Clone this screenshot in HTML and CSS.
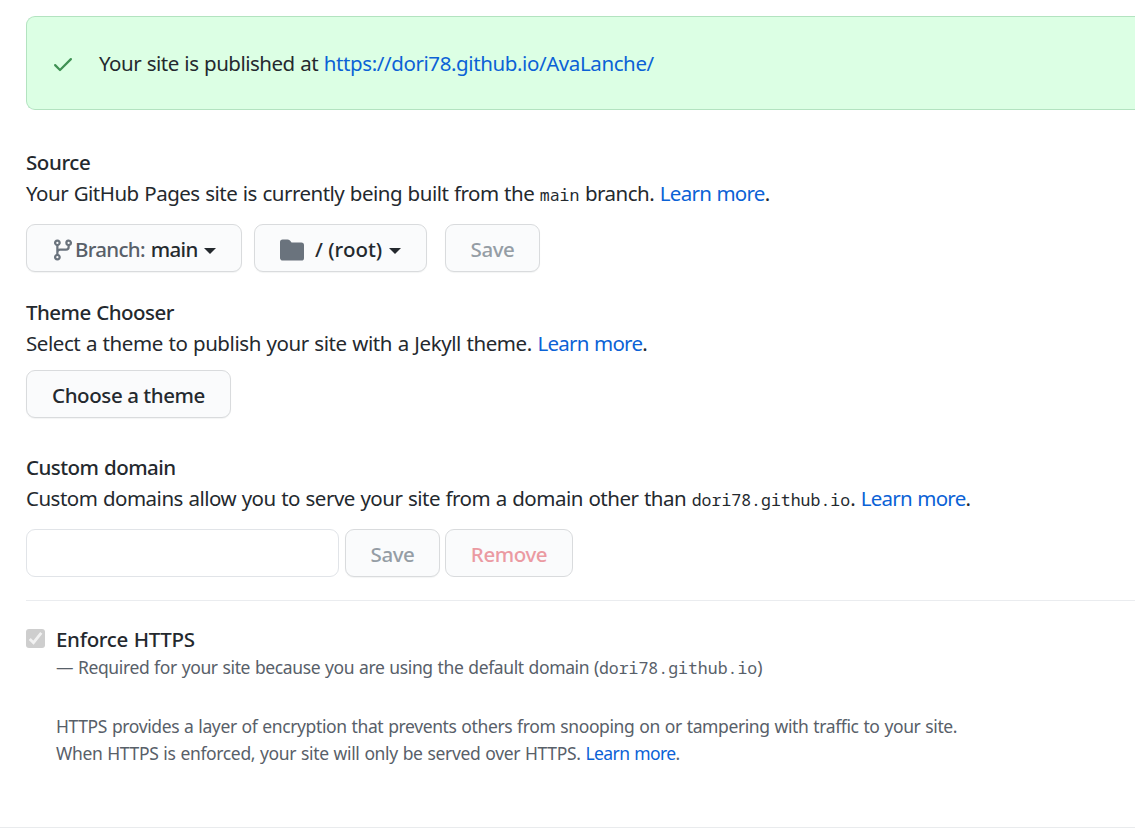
FILE: index.html
```html
<!DOCTYPE html>
<html lang="en">
<head>
<meta charset="utf-8">
<title>GitHub Pages settings</title>
<link rel="stylesheet" href="styles.css">
</head>
<body>
<main class="settings">
  <div class="flash">
    <svg class="check" viewBox="0 0 16 16" width="24" height="24"><path d="M13.78 4.22a.75.75 0 010 1.06l-7.25 7.25a.75.75 0 01-1.06 0L2.22 9.28a.75.75 0 011.06-1.06L6 10.94l6.72-6.72a.75.75 0 011.06 0z"/></svg>
    <p><span class="status">Your site is published at </span><a class="site" href="#">https://dori78.github.io/AvaLanche/</a></p>
  </div>

  <section class="source">
    <h2>Source</h2>
    <p>Your GitHub Pages site is currently being built from the <code>main</code> branch. <a href="#">Learn more</a>.</p>
    <div class="controls">
      <button class="btn branch" type="button"><svg class="icon" viewBox="0 0 16 16" width="24" height="24"><path fill-rule="evenodd" d="M11.75 2.5a.75.75 0 100 1.5.75.75 0 000-1.5zm-2.25.75a2.25 2.25 0 113 2.122V6A2.5 2.5 0 0110 8.5H6a1 1 0 00-1 1v1.128a2.251 2.251 0 11-1.5 0V5.372a2.25 2.25 0 111.5 0v1.836A2.492 2.492 0 016 7h4a1 1 0 001-1v-.628A2.25 2.25 0 019.5 3.25zM4.25 12a.75.75 0 100 1.5.75.75 0 000-1.5zM3.5 3.25a.75.75 0 111.5 0 .75.75 0 01-1.5 0z"/></svg><span class="muted">Branch:</span><span class="value">main</span><i class="caret"></i></button>
      <button class="btn folder" type="button"><svg class="icon" viewBox="0 0 16 16" width="24" height="24"><path d="M1.75 1A1.75 1.75 0 000 2.75v10.500C0 14.216.784 15 1.750 15h12.500A1.750 1.750 0 0016 13.250v-8.500A1.750 1.750 0 0014.250 3h-6.500a.25.25 0 01-.2-.1l-.9-1.200C6.070 1.260 5.550 1 5 1H1.750z"/></svg><span class="value">/ (root)</span><i class="caret"></i></button>
      <button class="btn save" type="button" disabled><span>Save</span></button>
    </div>
  </section>

  <section class="theme">
    <h2>Theme Chooser</h2>
    <p><span class="hint">Select a theme to publish your site with a Jekyll theme. </span><a href="#">Learn more</a>.</p>
    <div class="controls"><button class="btn choose" type="button"><span>Choose a theme</span></button></div>
  </section>

  <section class="domain">
    <h2>Custom domain</h2>
    <p>Custom domains allow you to serve your site from a domain other than <code>dori78.github.io</code>. <a href="#">Learn more</a>.</p>
    <div class="controls">
      <input class="field" type="text" aria-label="Custom domain">
      <button class="btn save" type="button" disabled><span>Save</span></button>
      <button class="btn remove" type="button" disabled><span>Remove</span></button>
    </div>
  </section>

  <section class="https">
    <span class="checkbox"><svg viewBox="0 0 19 19" width="19" height="19"><path d="M3.700 9.900l3.800 3.800 7.800-9.800"/></svg></span>
    <div class="https-body">
      <h2>Enforce HTTPS</h2>
      <p class="small">— Required for your site because you are using the default domain (<code>dori78.github.io</code>)</p>
      <p class="small note">HTTPS provides a layer of encryption that prevents others from snooping on or tampering with traffic to your site.<br><span class="served">When HTTPS is enforced, your site will only be served over HTTPS. </span><a href="#">Learn more</a>.</p>
    </div>
  </section>
</main>
</body>
</html>
```
FILE: styles.css
```css
* { box-sizing: border-box; }
body {
  margin: 0;
  background: #fff;
  color: #24292e;
  font: 20.5px/31px "Noto Sans", "Open Sans", sans-serif;
  letter-spacing: -.5px;
  word-spacing: .7px;
  overflow: hidden;
}
.settings { height: 828px; padding: 16px 0 0 26px; border-bottom: 1px solid #e9ebed; }
h2, p { margin: 0; white-space: nowrap; }
h2 { font-size: 20.5px; font-weight: 540; line-height: 31px; letter-spacing: -.42px; }
.theme h2, .domain h2 { letter-spacing: -.52px; }
.https h2 { letter-spacing: -.32px; }
p span, p a { white-space: pre; }
a { color: #0b62d6; text-decoration: none; letter-spacing: -.73px; }
.site { letter-spacing: -.4px; }
.status { letter-spacing: -.49px; }
.hint { letter-spacing: -.43px; }
code { font: 16.5px/20px "Noto Sans Mono", "DejaVu Sans Mono", monospace; letter-spacing: 0; word-spacing: 0; }
.flash {
  display: flex;
  align-items: center;
  height: 94px;
  margin-bottom: 37px;
  padding-left: 24px;
  background: #dcffe4;
  border: 1px solid #b3e3c0;
  border-right: 0;
  border-radius: 9px 0 0 9px;
}
.check { margin: 2px 24px 0 0; fill: #3f9153; }
.source { height: 150px; }
.theme { height: 155px; }
.domain { height: 149px; border-bottom: 1px solid #eaecef; }
.controls { display: flex; margin-top: 15px; }
.theme .controls { margin-top: 11px; }
.btn {
  display: flex;
  align-items: center;
  justify-content: center;
  height: 48px;
  padding: 2px 0 0;
  color: #24292e;
  background: #fafbfc;
  border: 1px solid #d9dbdd;
  border-radius: 9px;
  box-shadow: 0 1px 1px rgba(27, 31, 35, .05);
  font: 540 20.5px/29px "Noto Sans", "Open Sans", sans-serif;
  letter-spacing: -.42px;
  white-space: pre;
}
.branch, .folder { justify-content: flex-start; }
.branch { width: 216px; margin-right: 12px; padding-left: 24px; }
.folder { width: 173px; margin-right: 18px; padding-left: 25px; }
.save { width: 95px; color: #959da5; }
.choose { width: 205px; }
.remove { width: 128px; margin-left: 5px; color: #eb9aa2; box-shadow: none; }
.icon { margin-top: 1px; fill: #6a737d; }
.muted { color: #586069; margin-right: 6px; letter-spacing: -.7px; }
.branch .value { letter-spacing: -.7px; }
.folder .value { margin-left: 11px; letter-spacing: 0; }
.caret { margin: 3px 0 0 6px; border: 6px solid transparent; border-top-color: #24292e; border-bottom: 0; }
.folder .caret { margin-left: 7px; }
.field { width: 313px; height: 48px; margin-right: 6px; border: 1px solid #e1e4e8; border-radius: 9px; background: #fff; }
.https { display: flex; padding-top: 23px; }
.checkbox { width: 19px; height: 19px; margin: 5px 11px 0 0; background: #cecece; border-radius: 3px; }
.checkbox svg { display: block; fill: none; stroke: #f2f2f2; stroke-width: 2.8; }
.small { margin-top: -1px; font-size: 17.5px; line-height: 27px; letter-spacing: -.385px; color: #586069; }
.small a { letter-spacing: -.57px; }
.served { letter-spacing: -.355px; }
.note { margin-top: 32px; }
```
